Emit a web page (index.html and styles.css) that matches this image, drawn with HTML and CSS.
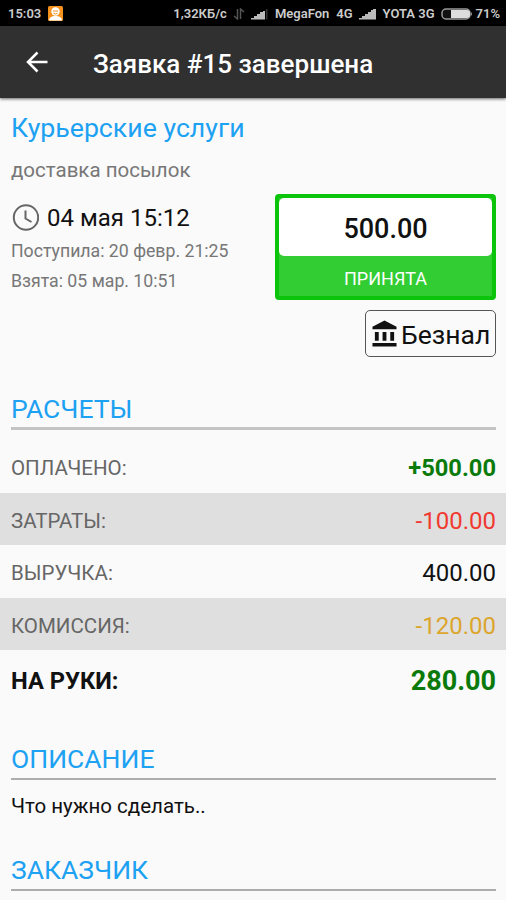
FILE: index.html
```html
<!DOCTYPE html>
<html lang="ru">
<head>
  <meta charset="UTF-8">
  <title>Заявка #15 завершена</title>
  <link rel="stylesheet" href="styles.css">
</head>
<body>
  <div class="status-bar">
    <span class="time">15:03</span>
    <svg class="app-icon" width="15" height="15" viewBox="0 0 15 15">
      <rect width="15" height="15" rx="1.5" fill="#f5921e"/>
      <circle cx="7.5" cy="5.5" r="4.2" fill="#fff"/>
      <path d="M1 14.5c.5-3.500 3-4.500 6.500-4.500s6 1 6.500 4.500z" fill="#fff"/>
      <path d="M5 5h5M5.500 7.200q2 1.600 4 0" stroke="#f5921e" fill="none"/>
    </svg>
    <span class="speed">1,32КБ/с</span>
    <svg class="arrows" width="12" height="12" viewBox="0 0 12 12" fill="none" stroke="#555" stroke-width="1.500">
      <path d="M4.500 1v10L1 8M7.500 11V1L11 4"/>
    </svg>
    <svg class="signal" width="17" height="12" viewBox="0 0 17 12">
      <path d="M0 11.500V10h3V8h3V6h3V4h3V3h2v8.500z" fill="#bbb"/>
      <path d="M15 1h1.500v10.500H15z" fill="#333"/>
    </svg>
    <span class="carrier-one">MegaFon</span>
    <span class="net-one">4G</span>
    <svg class="signal" width="17" height="12" viewBox="0 0 17 12">
      <path d="M0 11.500V10h3V8h3V6h3V4h3V2h2V1h3v10.500z" fill="#bbb"/>
    </svg>
    <span class="carrier-two">YOTA 3G</span>
    <svg class="battery" width="32" height="12" viewBox="0 0 32 12">
      <rect x="1" y="1" width="28" height="10" rx="4" fill="#111" stroke="#999" stroke-width="1.500"/>
      <path d="M10 2h16q3 0 3 3v2q0 3-3 3H10z" fill="#ddd"/>
      <path d="M30 4q2 2 0 4z" fill="#999"/>
    </svg>
    <span class="percent">71%</span>
  </div>

  <header class="app-bar">
    <svg class="back" width="22" height="22" viewBox="0 0 22 22" fill="none" stroke="#fff" stroke-width="2.500">
      <path d="M21.500 11H2.500M11.500 1.500L2 11l9.500 9.500"/>
    </svg>
    <h1>Заявка #15 завершена</h1>
  </header>

  <main>
    <h2 class="service">Курьерские услуги</h2>
    <p class="kind">доставка посылок</p>

    <div class="summary">
      <div class="dates">
        <div class="date-main">
          <svg width="28" height="28" viewBox="0 0 28 28" fill="none" stroke="#666" stroke-width="2">
            <circle cx="15" cy="13.500" r="12.200"/>
            <path d="M14.500 6.500v8l6 3.500"/>
          </svg>
          <span>04 мая 15:12</span>
        </div>
        <p class="received">Поступила: 20 февр. 21:25</p>
        <p class="taken">Взята: 05 мар. 10:51</p>
      </div>
      <div class="payment">
        <div class="price-card">
          <div class="price"><span>500.00</span></div>
          <div class="state"><span>ПРИНЯТА</span></div>
        </div>
        <div class="cashless">
          <svg width="25" height="27" viewBox="0 0 26 27" fill="#111">
            <path d="M13 0L25.500 6.500V9H.5V6.500zM3 12h4v9H3zM11 12h4v9h-4zM19 12h4v9h-4zM.5 23.500h25V27H.5z"/>
          </svg>
          <span>Безнал</span>
        </div>
      </div>
    </div>

    <h2 class="section first"><span>РАСЧЕТЫ</span></h2>
    <div class="calc">
      <div class="row"><span>ОПЛАЧЕНО:</span><b class="plus">+500.00</b></div>
      <div class="row gray"><span>ЗАТРАТЫ:</span><span class="value minus">-100.00</span></div>
      <div class="row"><span>ВЫРУЧКА:</span><span class="value">400.00</span></div>
      <div class="row gray"><span>КОМИССИЯ:</span><span class="value fee">-120.00</span></div>
      <div class="row total"><b>НА РУКИ:</b><b class="sum">280.00</b></div>
    </div>

    <h2 class="section"><span>ОПИСАНИЕ</span></h2>
    <p class="description">Что нужно сделать..</p>
    <h2 class="section"><span>ЗАКАЗЧИК</span></h2>
  </main>
</body>
</html>
```

FILE: styles.css
```css
* {
  box-sizing: border-box;
}

body {
  margin: 0;
  height: 900px;
  overflow: hidden;
  background: #fafafa;
  color: #111;
  font-family: Roboto, sans-serif;
}

h1, h2, p {
  margin: 0;
  font-weight: 400;
}

svg {
  flex: none;
}

.status-bar {
  display: flex;
  align-items: center;
  height: 26px;
  padding: 1px 6px 0 8px;
  background: #000;
  color: #ccc;
  font-size: 13px;
  font-weight: 600;
  white-space: nowrap;
}

.app-icon {
  margin-left: 7px;
}

.speed {
  margin-left: auto;
}

.arrows {
  margin-left: 6px;
}

.signal {
  margin-left: 6px;
}

.carrier-one,
.net-one,
.carrier-two {
  margin-left: 7px;
}

.battery {
  margin-left: 6px;
}

.percent {
  margin-left: 3px;
}

.app-bar {
  display: flex;
  align-items: center;
  height: 72px;
  padding: 2px 0 0 26px;
  background: #303030;
  box-shadow: 0 1px 3px rgba(0,0,0,0.6);
}

.back {
  margin-top: -2px;
}

.app-bar h1 {
  margin-left: 45px;
  padding-top: 1px;
  color: #fff;
  font-size: 26px;
  font-weight: 500;
}

.service {
  height: 60px;
  padding-left: 11px;
  color: #1da1f2;
  font-size: 26.7px;
  line-height: 61px;
}

.kind {
  height: 24px;
  padding-left: 11px;
  color: #777;
  font-size: 20.5px;
  line-height: 24px;
}

.summary {
  display: flex;
  justify-content: space-between;
  height: 203px;
  padding: 12px 10px 0 11px;
}

.date-main {
  display: flex;
  align-items: center;
  gap: 8px;
  height: 47px;
  font-size: 24px;
}

.received,
.taken {
  height: 30px;
  color: #777;
  font-size: 17.7px;
  line-height: 21px;
}

.payment {
  display: flex;
  flex-direction: column;
  align-items: flex-end;
  gap: 10px;
}

.price-card {
  width: 221px;
  height: 106px;
  border: 4px solid #0bc40b;
  border-radius: 4px;
  background: #32cd32;
  text-align: center;
}

.price {
  height: 58px;
  border-radius: 5px;
  background: #fff;
  font-size: 27px;
  font-weight: 500;
  line-height: 62px;
}

.state {
  color: #fff;
  font-size: 18px;
  line-height: 45px;
}

.cashless {
  display: flex;
  align-items: center;
  width: 131px;
  height: 47px;
  padding-left: 6px;
  gap: 4px;
  border: 1px solid #555;
  border-radius: 5px;
  font-size: 26.5px;
}

.cashless span {
  padding-top: 2px;
}

.section {
  height: 45px;
  margin: 0 10px 0 11px;
  border-bottom: 2px solid #adadad;
  color: #1da1f2;
  font-size: 26.5px;
  line-height: 48px;
}

.first {
  border-bottom: 3px solid #c4c4c4;
}

.calc {
  padding: 10px 0 25px;
}

.row {
  display: flex;
  justify-content: space-between;
  align-items: center;
  height: 52.5px;
  padding: 4px 10px 0 11px;
  color: #666;
  font-size: 20.5px;
}

.gray {
  background: #dfdfdf;
}

.value {
  color: #111;
  font-size: 24px;
}

.plus {
  color: #0b7a0b;
  font-size: 23.7px;
  font-weight: 700;
}

.minus {
  color: #f03a30;
}

.fee {
  color: #dca52c;
}

.total {
  height: 60px;
  padding-top: 2px;
  color: #111;
  font-size: 23.7px;
}

.sum {
  color: #0b7a0b;
  font-size: 27px;
}

.description {
  height: 66px;
  padding-left: 11px;
  font-size: 20.5px;
  line-height: 52px;
}
```
